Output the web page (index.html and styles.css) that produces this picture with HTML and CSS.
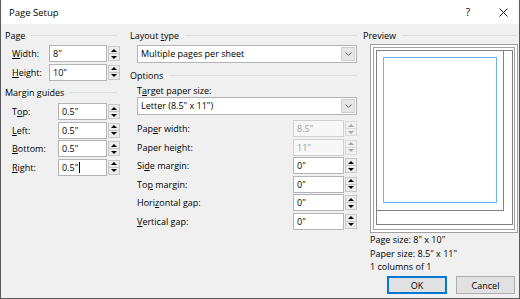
FILE: index.html
```html
<!DOCTYPE html>
<html>
<head>
<meta charset="utf-8">
<link rel="stylesheet" href="styles.css">
</head>
<body>
<div class="window">
  <div class="titlebar">
    <span class="title">Page Setup</span>
    <span class="help">?</span>
    <svg class="close" width="9" height="9" viewBox="0 0 9 9"><path d="M0.5 0.5L8.5 8.5M8.5 0.5L0.5 8.5" stroke="#222" stroke-width="1" fill="none"/></svg>
  </div>
  <div class="content">
    <div class="col col-left">
      <div class="group-head"><span>Page</span><span class="line"></span></div>
      <div class="row first">
        <label class="lbl lbl-page"><u>W</u>idth:</label>
        <div class="spin spin-page"><div class="field">8"</div><div class="spinner"><span class="up"></span><span class="down"></span></div></div>
      </div>
      <div class="row">
        <label class="lbl lbl-page"><u>H</u>eight:</label>
        <div class="spin spin-page"><div class="field">10"</div><div class="spinner"><span class="up"></span><span class="down"></span></div></div>
      </div>
      <div class="group-head gh-margins"><span>Margin guides</span><span class="line"></span></div>
      <div class="row first">
        <label class="lbl lbl-margin">T<u>o</u>p:</label>
        <div class="spin spin-margin"><div class="field">0.5"</div><div class="spinner"><span class="up"></span><span class="down"></span></div></div>
      </div>
      <div class="row">
        <label class="lbl lbl-margin"><u>L</u>eft:</label>
        <div class="spin spin-margin"><div class="field">0.5"</div><div class="spinner"><span class="up"></span><span class="down"></span></div></div>
      </div>
      <div class="row">
        <label class="lbl lbl-margin"><u>B</u>ottom:</label>
        <div class="spin spin-margin"><div class="field">0.5"</div><div class="spinner"><span class="up"></span><span class="down"></span></div></div>
      </div>
      <div class="row">
        <label class="lbl lbl-margin"><u>R</u>ight:</label>
        <div class="spin spin-margin"><div class="field">0.5"<span class="caret"></span></div><div class="spinner"><span class="up"></span><span class="down"></span></div></div>
      </div>
    </div>

    <div class="col col-mid">
      <div class="group-head"><span>Layout <u>t</u>ype</span><span class="line"></span></div>
      <div class="select sel-layout">
        <div class="sel-text">Multiple pages per sheet</div>
        <div class="sel-btn"><svg width="7" height="4" viewBox="0 0 7 4"><path d="M0.5 0.5L3.5 3.5L6.5 0.5" stroke="#606060" fill="none"/></svg></div>
      </div>
      <div class="group-head gh-options"><span>Options</span><span class="line"></span></div>
      <div class="sub-label">T<u>a</u>rget paper size:</div>
      <div class="select sel-target">
        <div class="sel-text">Letter (8.5" x 11")</div>
        <div class="sel-btn"><svg width="7" height="4" viewBox="0 0 7 4"><path d="M0.5 0.5L3.5 3.5L6.5 0.5" stroke="#606060" fill="none"/></svg></div>
      </div>
      <div class="row opt first">
        <label class="lbl lbl-opt">Pap<u>e</u>r width:</label>
        <div class="spin spin-opt disabled"><div class="field">8.5"</div><div class="spinner"><span class="up"></span><span class="down"></span></div></div>
      </div>
      <div class="row opt">
        <label class="lbl lbl-opt">Paper hei<u>g</u>ht:</label>
        <div class="spin spin-opt disabled"><div class="field">11"</div><div class="spinner"><span class="up"></span><span class="down"></span></div></div>
      </div>
      <div class="row opt">
        <label class="lbl lbl-opt">Si<u>d</u>e margin:</label>
        <div class="spin spin-opt"><div class="field">0"</div><div class="spinner"><span class="up"></span><span class="down"></span></div></div>
      </div>
      <div class="row opt">
        <label class="lbl lbl-opt">To<u>p</u> margin:</label>
        <div class="spin spin-opt"><div class="field">0"</div><div class="spinner"><span class="up"></span><span class="down"></span></div></div>
      </div>
      <div class="row opt">
        <label class="lbl lbl-opt">Hori<u>z</u>ontal gap:</label>
        <div class="spin spin-opt"><div class="field">0"</div><div class="spinner"><span class="up"></span><span class="down"></span></div></div>
      </div>
      <div class="row opt">
        <label class="lbl lbl-opt"><u>V</u>ertical gap:</label>
        <div class="spin spin-opt"><div class="field">0"</div><div class="spinner"><span class="up"></span><span class="down"></span></div></div>
      </div>
    </div>

    <div class="col col-right">
      <div class="group-head"><span>Preview</span><span class="line"></span></div>
      <svg class="preview" width="148" height="189" viewBox="0 0 148 189">
        <rect x="0.5" y="0.5" width="147" height="188" fill="#fff" stroke="#a0a0a0"/>
        <rect x="3.5" y="3.5" width="141" height="182" fill="#fff" stroke="#a0a0a0"/>
        <rect x="6.5" y="6.5" width="136" height="174" fill="#fff" stroke="#808080"/>
        <rect x="6.5" y="6.5" width="127" height="160" fill="#fff" stroke="#808080"/>
        <rect x="13.5" y="13.5" width="113" height="145" fill="none" stroke="#9fcdfb"/>
        <rect x="13.5" y="13.5" width="113" height="145" fill="none" stroke="#3d98f2" stroke-dasharray="1 1"/>
      </svg>
      <div class="info">
        <div>Page size: 8" x 10"</div>
        <div>Paper size: 8.5" x 11"</div>
        <div>1 columns of 1</div>
      </div>
      <div class="buttons">
        <div class="btn primary">OK</div>
        <div class="btn cancel">Cancel</div>
      </div>
    </div>
  </div>
</div>
</body>
</html>
```

FILE: styles.css
```css
* { box-sizing: border-box; }

body {
  margin: 0;
  width: 520px;
  height: 299px;
  overflow: hidden;
  font-family: "Open Sans", "Noto Sans", sans-serif;
  font-size: 9px;
  color: #000;
  background: #f0f0f0;
}

.window {
  width: 520px;
  height: 299px;
  border: 1px solid #5a5a5a;
  border-top: none;
  background: #f0f0f0;
  display: flex;
  flex-direction: column;
}

.titlebar {
  height: 24px;
  flex: none;
  background: #fff;
  display: flex;
  align-items: center;
  padding-left: 8px;
  padding-right: 11px;
}

.title {
  font-size: 9.5px;
}

.help {
  margin-left: auto;
  font-size: 10px;
  margin-right: 29px;
}

.content {
  display: flex;
  padding: 4px 0 0 4px;
  flex: 1;
}

.col {
  display: flex;
  flex-direction: column;
}

.col-left {
  width: 115px;
  margin-right: 10px;
}

.col-mid {
  width: 227px;
  margin-right: 6px;
}

.col-right {
  width: 154px;
}

.group-head {
  display: flex;
  align-items: center;
  height: 14px;
  white-space: nowrap;
}

.group-head .line {
  flex: 1;
  height: 1px;
  background: #dcdcdc;
  margin-left: 6px;
}

.col-left .group-head .line {
  margin-right: 3px;
}

.gh-margins { margin-top: 4.5px; }
.gh-options { margin-top: 5px; }

.row {
  display: flex;
  align-items: center;
  height: 17px;
  margin-top: 1.5px;
  padding-left: 7px;
}

.row.first { margin-top: 3px; }
.gh-margins + .row.first { margin-top: 4px; }
.row.opt.first { margin-top: 5px; }

.lbl { white-space: nowrap; }
.lbl-page { width: 37px; }
.lbl-margin { width: 46px; }
.lbl-opt { flex: 1; }

.spin {
  display: flex;
  height: 17px;
}

.spin-page { width: 71px; }
.spin-margin { width: 62px; }
.spin-opt { width: 64px; }

.field {
  flex: 1;
  background: #fff;
  border: 1px solid #b4b4b4;
  padding-left: 3px;
  line-height: 15px;
  white-space: nowrap;
}

.caret {
  display: inline-block;
  width: 1px;
  height: 11px;
  background: #000;
  vertical-align: -2px;
  margin-left: 1px;
}

.spinner {
  width: 12px;
  margin-left: 1px;
  margin-top: 1px;
  margin-bottom: 1px;
  display: flex;
  flex-direction: column;
  border: 1px solid #c8c8c8;
  background: #ececec;
}

.spinner span {
  flex: 1;
  display: flex;
  align-items: center;
  justify-content: center;
}

.spinner .up { border-bottom: 1px solid #c8c8c8; }

.spinner .up::before {
  content: "";
  border-left: 3px solid transparent;
  border-right: 3px solid transparent;
  border-bottom: 3px solid #000;
}

.spinner .down::before {
  content: "";
  border-left: 3px solid transparent;
  border-right: 3px solid transparent;
  border-top: 3px solid #000;
}

.disabled .field {
  background: #f7f7f7;
  border-color: #d0d0d0;
  color: #a0a0a0;
}

.disabled .spinner {
  border-color: #dadada;
  background: #f0f0f0;
}

.disabled .spinner .up { border-bottom-color: #dadada; }
.disabled .spinner .up::before { border-bottom-color: #a8a8a8; }
.disabled .spinner .down::before { border-top-color: #a8a8a8; }

.select {
  display: flex;
  height: 18px;
  border: 1px solid #b4b4b4;
  background: #fff;
  margin-left: 7px;
}

.sel-layout { margin-top: 3px; }

.sel-text {
  flex: 1;
  padding-left: 3px;
  line-height: 16px;
  white-space: nowrap;
}

.sel-btn {
  width: 14px;
  margin: 1px;
  background: #e6e6e6;
  border: 1px solid #cfcfcf;
  display: flex;
  align-items: center;
  justify-content: center;
}

.sub-label {
  padding-left: 7px;
  margin-top: 2px;
  height: 13px;
  line-height: 13px;
}

.preview {
  display: block;
  margin-top: 2px;
  margin-left: 7px;
}

.info {
  padding-left: 7px;
  line-height: 13.5px;
}

.buttons {
  display: flex;
  justify-content: flex-end;
  gap: 9px;
  margin-top: 2.5px;
  padding-right: 2px;
}

.btn {
  height: 18px;
  background: #e1e1e1;
  border: 1px solid #adadad;
  display: flex;
  align-items: center;
  justify-content: center;
}

.btn.primary {
  width: 60px;
  border: 2px solid #0078d7;
}

.btn.cancel {
  width: 59px;
}
```
